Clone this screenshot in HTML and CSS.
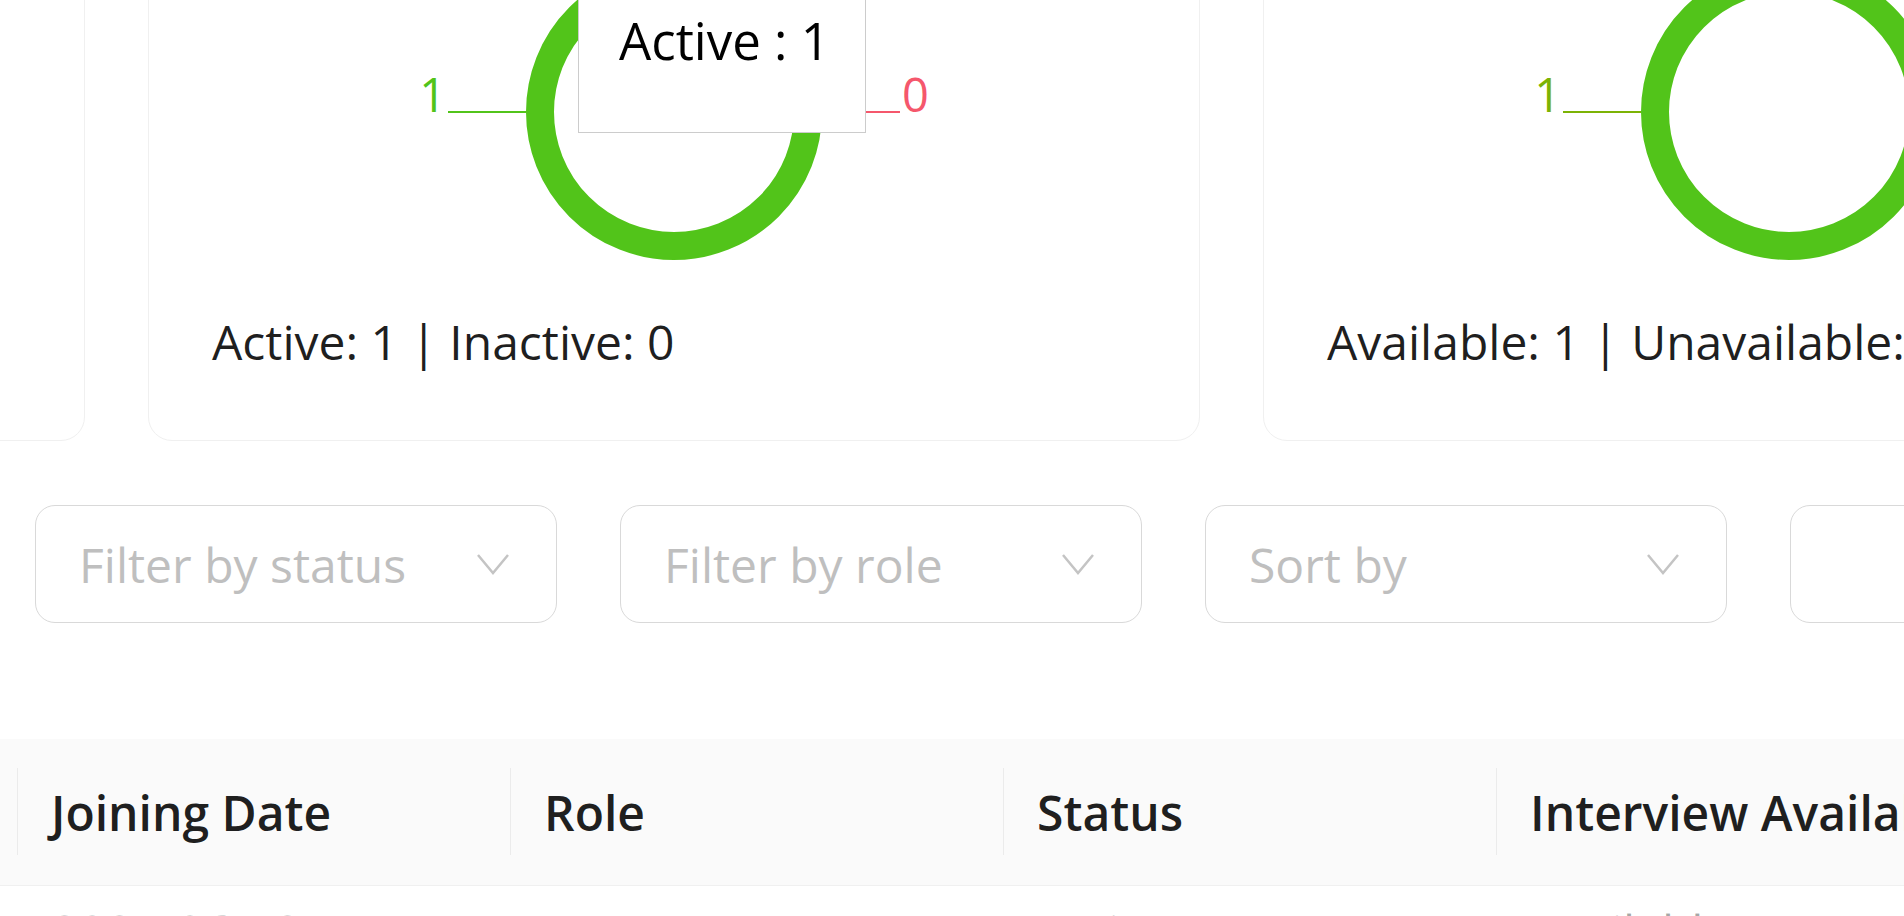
FILE: index.html
```html
<!DOCTYPE html>
<html>
	<head>
		<meta charset="utf-8" />
		<title>Employees</title>
		<link rel="stylesheet" href="styles.css">
	</head>
	<body>
		<div class="page">
			<!-- summary cards -->
			<div class="cards">
				<div class="card">
					<svg class="chart" width="924" height="340">
						<circle cx="462" cy="170" r="134" fill="none" stroke="#1677ff" stroke-width="28" />
					</svg>
					<p class="summary">Total Employees: 1</p>
				</div>
				<div class="card">
					<svg class="chart" width="924" height="340">
						<circle cx="462" cy="170" r="134" fill="none" stroke="#52c41a" stroke-width="28" />
						<line x1="314" y1="170" x2="236" y2="170" stroke="#52c41a" stroke-width="2" />
						<text x="234" y="170" text-anchor="end" fill="#52c41a" class="label">1</text>
						<line x1="610" y1="170" x2="688" y2="170" stroke="#f5576c" stroke-width="2" />
						<text x="690" y="170" fill="#f5576c" class="label">0</text>
					</svg>
					<p class="summary">Active: 1 | Inactive: 0</p>
					<div class="tip">
						<p class="tip-item">Active : 1</p>
					</div>
				</div>
				<div class="card">
					<svg class="chart" width="924" height="340">
						<circle cx="462" cy="170" r="134" fill="none" stroke="#52c41a" stroke-width="28" />
						<line x1="314" y1="170" x2="236" y2="170" stroke="#7cb305" stroke-width="2" />
						<text x="234" y="170" text-anchor="end" fill="#7cb305" class="label">1</text>
						<line x1="610" y1="170" x2="688" y2="170" stroke="#f5576c" stroke-width="2" />
						<text x="690" y="170" fill="#f5576c" class="label">0</text>
					</svg>
					<p class="summary">Available: 1 | Unavailable: 0</p>
				</div>
			</div>

			<!-- filters -->
			<div class="filters">
				<div class="select">
					<span>Filter by status</span>
					<svg class="arrow" width="34" height="24" viewBox="0 0 34 24"><polyline points="2,3 17,21 32,3" /></svg>
				</div>
				<div class="select">
					<span>Filter by role</span>
					<svg class="arrow" width="34" height="24" viewBox="0 0 34 24"><polyline points="2,3 17,21 32,3" /></svg>
				</div>
				<div class="select">
					<span>Sort by</span>
					<svg class="arrow" width="34" height="24" viewBox="0 0 34 24"><polyline points="2,3 17,21 32,3" /></svg>
				</div>
				<div class="select"></div>
			</div>

			<!-- table -->
			<div class="table">
				<div class="thead">
					<div class="th first">Name</div>
					<div class="th">Joining Date</div>
					<div class="th">Role</div>
					<div class="th">Status</div>
					<div class="th">Interview Availability</div>
				</div>
				<div class="tr">
					<div class="td first">John Doe</div>
					<div class="td">2024-06-12</div>
					<div class="td">HR</div>
					<div class="td">Active</div>
					<div class="td">Available</div>
				</div>
			</div>
		</div>
	</body>
</html>
```

FILE: styles.css
```css
*{
	margin:0px;
	padding:0px;
}
body{
	background: #fff;
	color: rgba(0,0,0,0.88);
	font-family: "Open Sans", "Noto Sans", sans-serif;
	font-size: 48px;
	overflow: hidden;
}
.page{
	margin-top: -200px;
}
.cards{
	display: flex;
	gap: 63px;
	margin-left: -967px;
}
.card{
	flex: 0 0 1052px;
	box-sizing: border-box;
	border: 1px solid #f0f0f0;
	border-radius: 24px;
	padding: 141px 63px 57px;
	position: relative;
}
.chart{
	display: block;
}
.label{
	font-size: 47px;
}
.summary{
	margin-top: 19px;
	line-height: 82px;
	white-space: nowrap;
}
.tip{
	position: absolute;
	left: 429px;
	top: 100px;
	width: 288px;
	box-sizing: border-box;
	background: #fff;
	border: 1px solid #ccc;
	padding: 107px 40px 61px;
}
.tip-item{
	font-size: 51px;
	line-height: 62px;
	white-space: nowrap;
	color: #000;
}
.filters{
	display: flex;
	gap: 63px;
	margin: 64px 0 0 35px;
}
.select{
	flex: 0 0 522px;
	height: 118px;
	box-sizing: border-box;
	border: 1px solid #d9d9d9;
	border-radius: 20px;
	padding: 0 46px 0 43px;
	display: flex;
	align-items: center;
	justify-content: space-between;
	color: #bfbfbf;
}
.arrow polyline{
	fill: none;
	stroke: #c4c4c4;
	stroke-width: 2.5;
}
.table{
	margin: 116px 0 0 -182px;
}
.thead, .tr{
	display: flex;
}
.thead{
	height: 146px;
	background: #fafafa;
	border-bottom: 1px solid #f0f0f0;
	font-weight: 600;
}
.th, .td{
	flex: 0 0 493px;
	box-sizing: border-box;
	padding-left: 33px;
	white-space: nowrap;
	overflow: hidden;
}
.th{
	position: relative;
	display: flex;
	align-items: center;
}
.th::after{
	content: "";
	position: absolute;
	right: 0;
	top: 50%;
	width: 1px;
	height: 87px;
	margin-top: -44px;
	background: rgba(0,0,0,0.06);
}
.th.first, .td.first{
	flex-basis: 200px;
}
.tr{
	padding-top: 15px;
	line-height: 62px;
	color: rgba(0,0,0,0.35);
}
```
